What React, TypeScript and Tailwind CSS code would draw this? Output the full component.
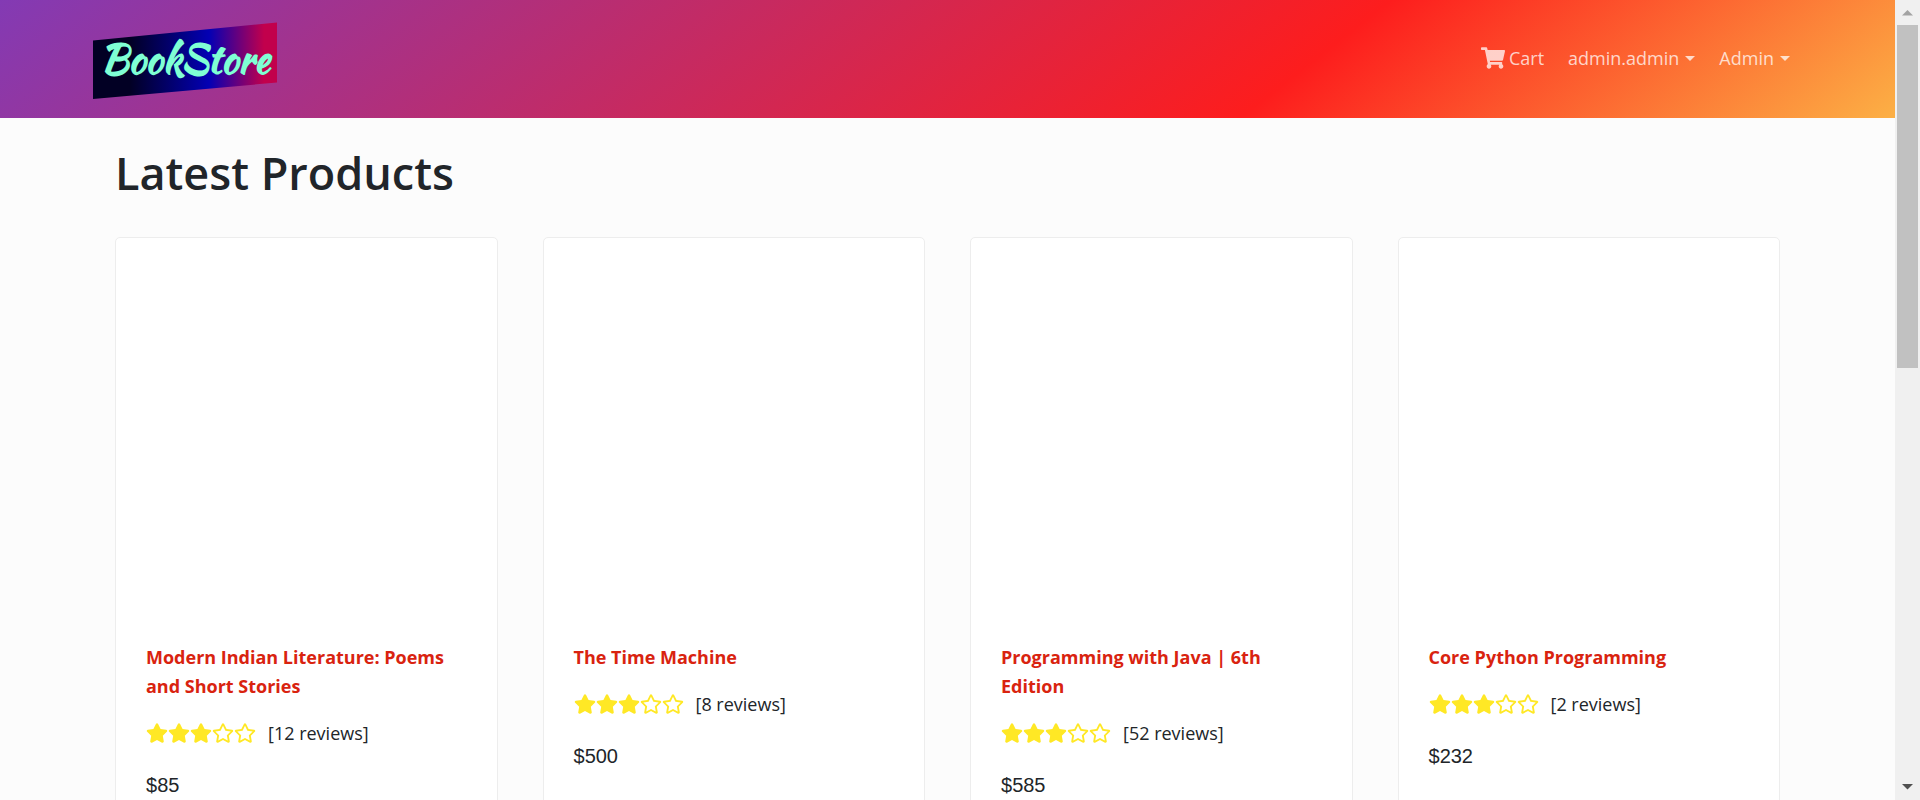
import { FaShoppingCart, FaStar, FaRegStar } from "react-icons/fa";

type Product = { title: string; rating: number; reviews: number; price: number };

const products: Product[] = [
  { title: "Modern Indian Literature: Poems and Short Stories", rating: 3, reviews: 12, price: 85 },
  { title: "The Time Machine", rating: 3, reviews: 8, price: 500 },
  { title: "Programming with Java | 6th Edition", rating: 3, reviews: 52, price: 585 },
  { title: "Core Python Programming", rating: 3, reviews: 2, price: 232 },
];

function Logo() {
  return (
    <a href="#" aria-label="BookStore home" className="block">
      <svg width="184" height="78" viewBox="0 0 184 78">
        <defs>
          <linearGradient id="logo-fill" x1="0" y1="0" x2="1" y2="0">
            <stop offset="0.2" stopColor="#020024" />
            <stop offset="0.63" stopColor="#0300b4" />
            <stop offset="0.93" stopColor="#c2004c" />
          </linearGradient>
        </defs>
        <path d="M0 18.500 184 0.500V60.500L0 77Z" fill="url(#logo-fill)" />
        <text
          x="92"
          y="51"
          textAnchor="middle"
          className="fill-[#7fffd4] font-['Kaushan_Script',cursive] text-[39px] font-bold"
        >
          BookStore
        </text>
      </svg>
    </a>
  );
}

function Caret() {
  return (
    <svg width="10" height="5" viewBox="0 0 10 5" fill="currentColor" aria-hidden="true">
      <path d="M0 0h10L5 5z" />
    </svg>
  );
}

function Header() {
  return (
    <header className="flex h-[118px] items-start justify-between bg-[linear-gradient(142deg,#833ab4_0%,#fd1d1d_68%,#fcb045_100%)] pr-[105px] pl-[93px]">
      <div className="pt-[22px]">
        <Logo />
      </div>
      <nav className="flex items-center gap-6 pt-11 text-lg leading-7 text-white/75">
        <a href="#" className="flex items-center gap-1">
          <FaShoppingCart className="size-6" />
          Cart
        </a>
        <button type="button" className="flex items-center gap-1.5">
          admin.admin
          <Caret />
        </button>
        <button type="button" className="flex items-center gap-1.5">
          Admin
          <Caret />
        </button>
      </nav>
    </header>
  );
}

function Rating({ value, reviews }: { value: number; reviews: number }) {
  return (
    <div className="flex items-center">
      <div className="flex text-[22px] text-[#ffe825]" role="img" aria-label={`${value} out of 5`}>
        {[1, 2, 3, 4, 5].map((n) => (n <= value ? <FaStar key={n} /> : <FaRegStar key={n} />))}
      </div>
      <span className="ml-3 text-lg leading-7">[{reviews} reviews]</span>
    </div>
  );
}

function ProductCard({ product }: { product: Product }) {
  return (
    <article className="rounded-[5px] border border-[#ededed] bg-white px-[30px] pb-10">
      <a href="#" aria-label={product.title} className="block h-[405px]" />
      <h2 className="text-lg leading-[29px] font-bold text-[#d9230f]">
        <a href="#">{product.title}</a>
      </h2>
      <div className="pt-[18px]">
        <Rating value={product.rating} reviews={product.reviews} />
      </div>
      <p className="pt-6 font-['Liberation_Sans',Arial,sans-serif] text-xl leading-7">${product.price}</p>
    </article>
  );
}

function Scrollbar() {
  return (
    <div className="flex w-[25px] shrink-0 flex-col items-center bg-[#f0f0f0]" aria-hidden="true">
      <svg width="25" height="25" viewBox="0 0 25 25" fill="#a3a3a3">
        <path d="M7 15.500h11L12.500 10z" />
      </svg>
      <div className="h-[343px] w-[21px] bg-[#c1c1c1]" />
      <svg className="mt-auto" width="25" height="25" viewBox="0 0 25 25" fill="#505050">
        <path d="M7 9h11l-5.500 5.500z" />
      </svg>
    </div>
  );
}

export default function App() {
  return (
    <div className="flex h-screen bg-[#fcfcfc] font-['Segoe_UI','Open_Sans','Noto_Sans',sans-serif] text-[#212529]">
      <div className="min-w-0 flex-1 overflow-hidden">
        <Header />
        <main className="px-[115px] pt-6">
          <h1 className="text-[45px] leading-[62px] font-semibold">Latest Products</h1>
          <div className="grid grid-cols-4 items-start gap-[45px] pt-[33px]">
            {products.map((p) => (
              <ProductCard key={p.title} product={p} />
            ))}
          </div>
        </main>
      </div>
      <Scrollbar />
    </div>
  );
}
